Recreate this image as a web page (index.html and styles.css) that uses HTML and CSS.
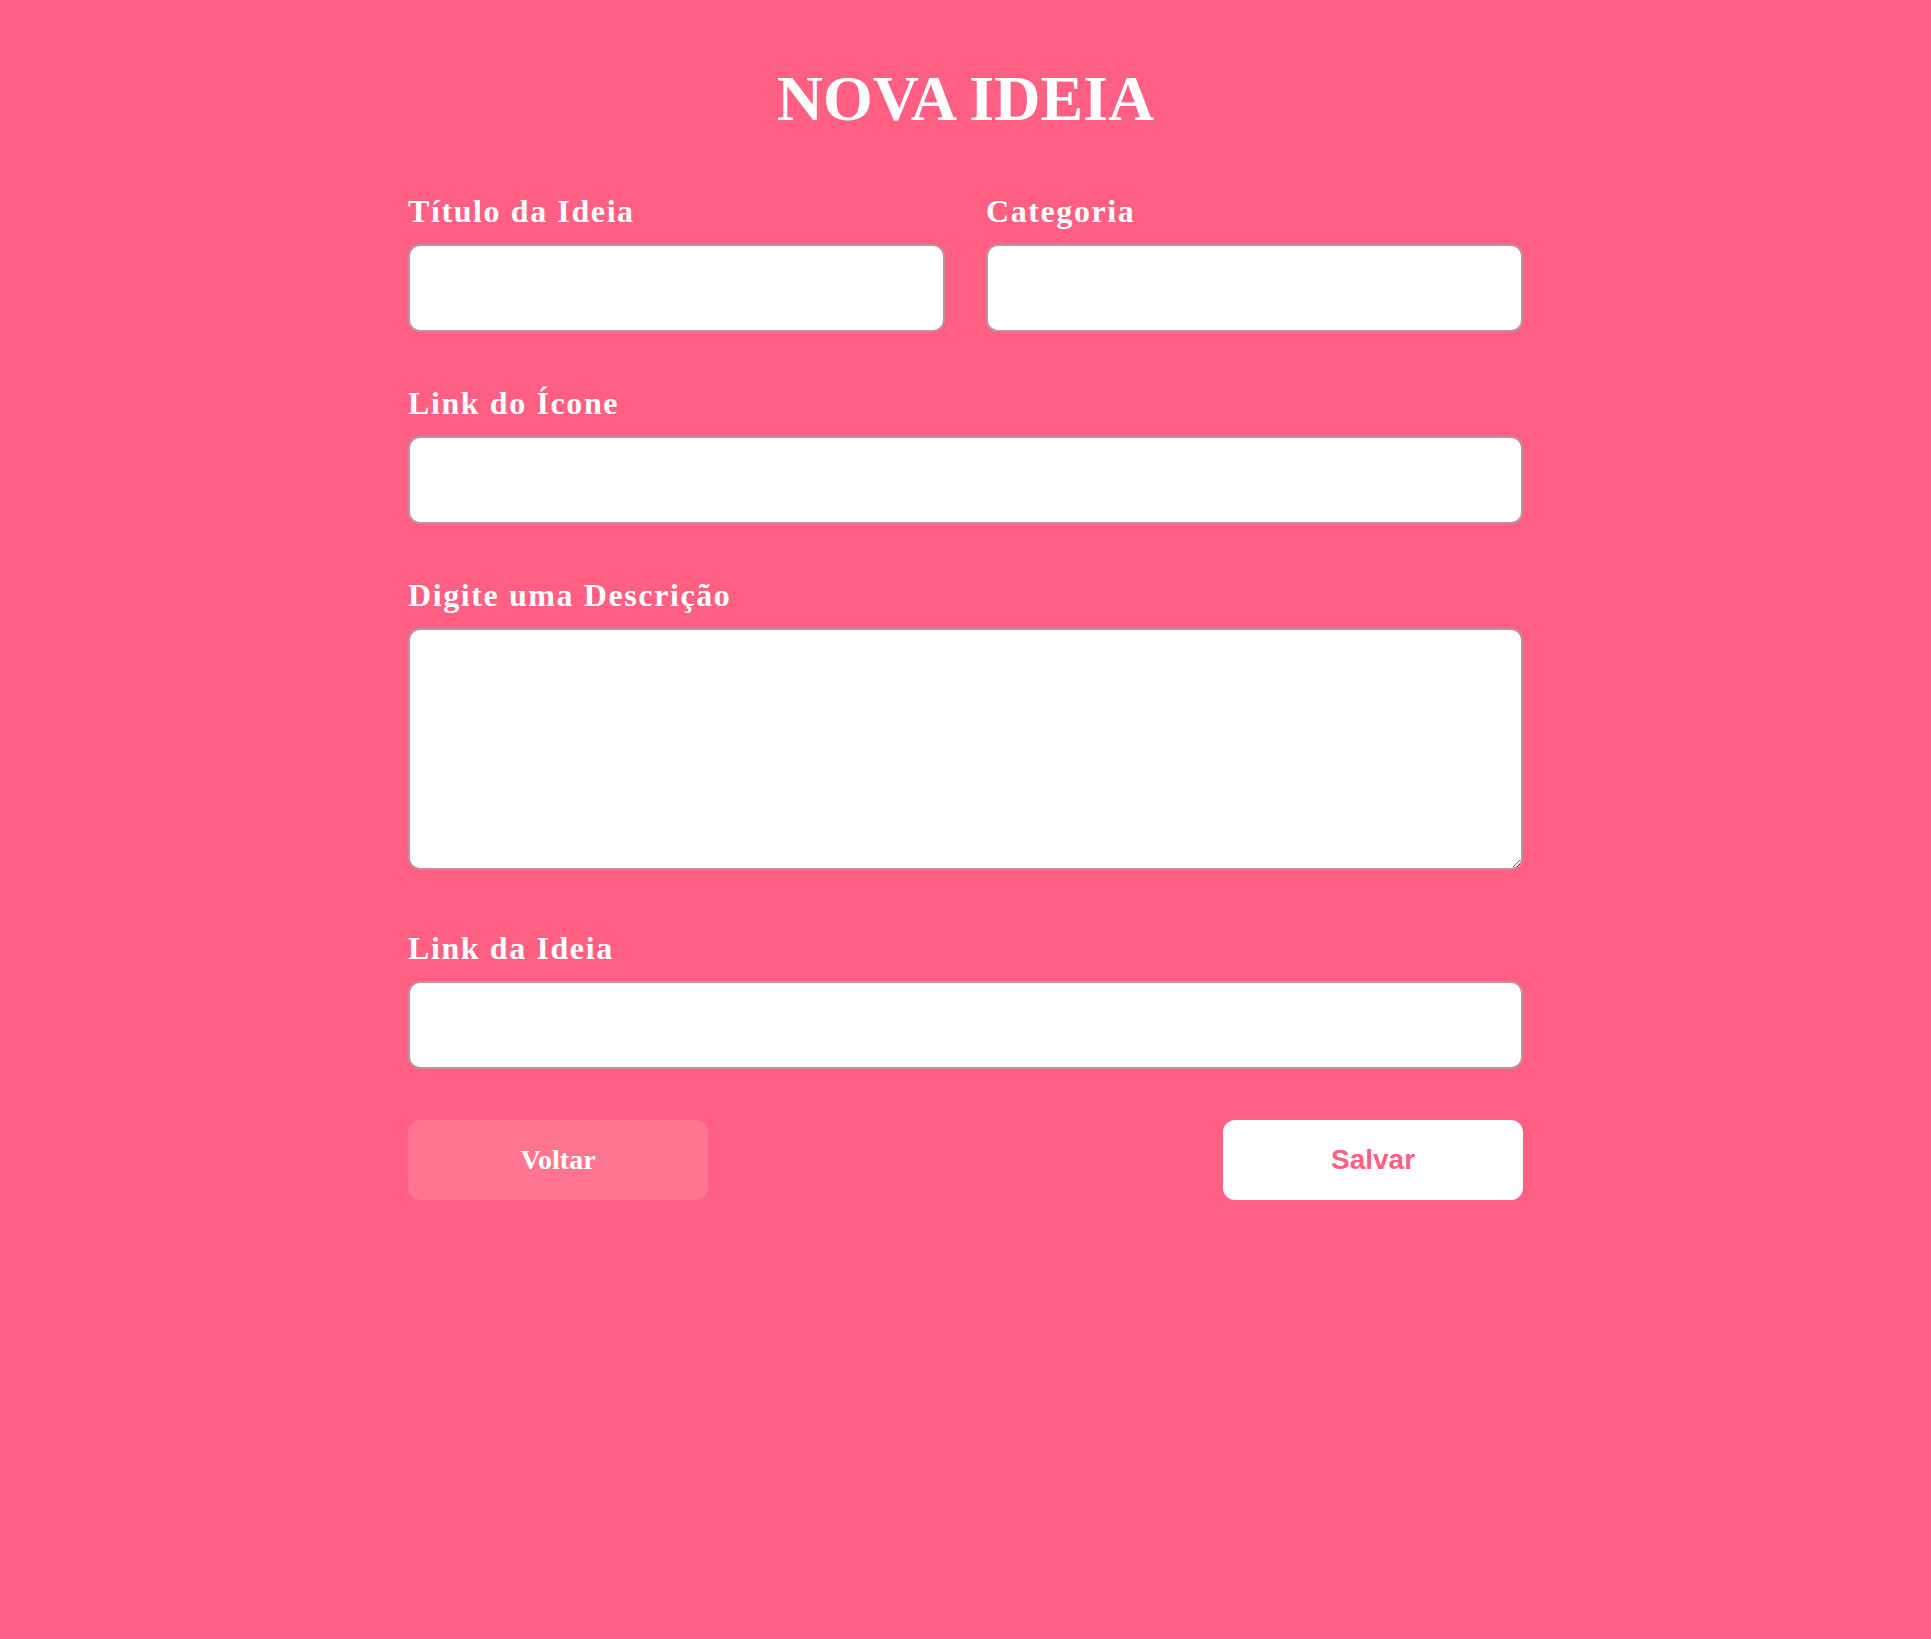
FILE: index.html
```html
<!DOCTYPE html>
<html lang="pt-BR">
<head>
<meta charset="utf-8">
<title>Nova Ideia</title>
<link rel="stylesheet" href="styles.css">
</head>
<body>
<main class="page">
  <h1 class="title">NOVA IDEIA</h1>
  <form class="form">
    <div class="row">
      <div class="field">
        <label class="label" for="titulo">Título da Ideia</label>
        <input class="input" id="titulo" type="text">
      </div>
      <div class="field">
        <label class="label" for="categoria">Categoria</label>
        <input class="input" id="categoria" type="text">
      </div>
    </div>
    <div class="field">
      <label class="label" for="icone">Link do Ícone</label>
      <input class="input" id="icone" type="text">
    </div>
    <div class="field field-area">
      <label class="label" for="descricao">Digite uma Descrição</label>
      <textarea class="input area" id="descricao"></textarea>
    </div>
    <div class="field field-last">
      <label class="label" for="link">Link da Ideia</label>
      <input class="input" id="link" type="text">
    </div>
    <div class="actions">
      <button type="button" class="btn btn-back">Voltar</button>
      <button type="button" class="btn btn-save">Salvar</button>
    </div>
  </form>
</main>
</body>
</html>
```

FILE: styles.css
```css
html, body {
  margin: 0;
  padding: 0;
}

body {
  background: #ff5f82;
  font-family: "Liberation Serif", "Times New Roman", serif;
  color: #ffffff;
  min-height: 1639px;
}

.page {
  width: 1115px;
  margin: 0 auto;
  padding-top: 62px;
}

.title {
  margin: 0 0 57px;
  font-size: 64px;
  line-height: 74px;
  font-weight: 700;
  text-align: center;
}

.form {
  display: flex;
  flex-direction: column;
}

.row {
  display: grid;
  grid-template-columns: 1fr 1fr;
  column-gap: 41px;
}

.field {
  display: flex;
  flex-direction: column;
  margin-bottom: 53px;
}

.field-area {
  margin-bottom: 60px;
}

.field-last {
  margin-bottom: 51px;
}

.label {
  font-size: 32px;
  line-height: 37px;
  font-weight: 700;
  letter-spacing: 1.6px;
  margin-bottom: 14px;
}

.input {
  box-sizing: border-box;
  height: 88px;
  width: 100%;
  border: 2px solid #c4909b;
  border-radius: 12px;
  background: #ffffff;
  padding: 10px 16px;
  font-size: 24px;
  font-family: "Liberation Sans", Arial, sans-serif;
  outline: none;
}

.area {
  display: block;
  height: 242px;
  resize: vertical;
}

.actions {
  display: flex;
  justify-content: space-between;
}

.btn {
  width: 300px;
  height: 80px;
  border: none;
  border-radius: 12px;
  font-size: 28px;
  font-weight: 700;
  cursor: pointer;
}

.btn-back {
  background: #ff7590;
  color: #ffffff;
  font-family: "Liberation Serif", "Times New Roman", serif;
}

.btn-save {
  background: #ffffff;
  color: #ff5f82;
  font-family: "Liberation Sans", Arial, sans-serif;
}
```
